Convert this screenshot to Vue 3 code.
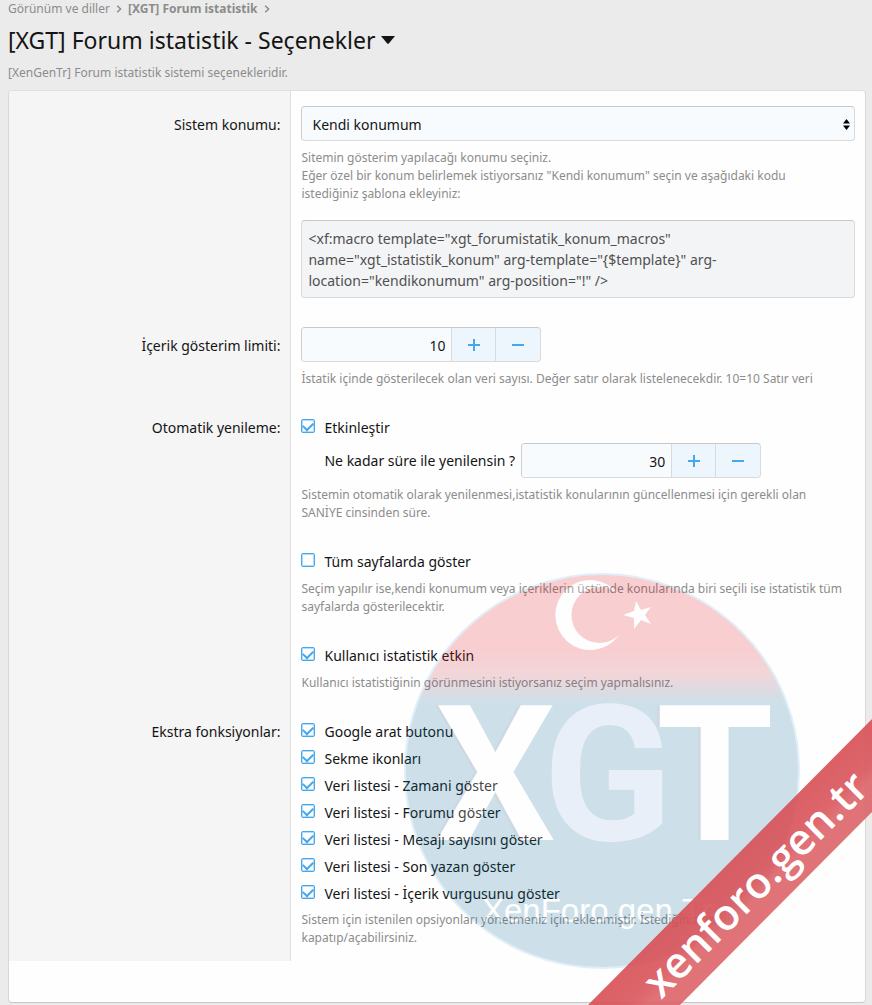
<script setup>
import { reactive, ref } from 'vue'

const location = ref('own')
const limit = ref(10)
const refresh = reactive({ enabled: true, seconds: 30 })
const allPages = ref(false)
const userStats = ref(true)
const extras = reactive([
  { id: 'google', label: 'Google arat butonu', on: true },
  { id: 'icons', label: 'Sekme ikonları', on: true },
  { id: 'time', label: 'Veri listesi - Zamani göster', on: true },
  { id: 'forum', label: 'Veri listesi - Forumu göster', on: true },
  { id: 'messages', label: 'Veri listesi - Mesajı sayısını göster', on: true },
  { id: 'author', label: 'Veri listesi - Son yazan göster', on: true },
  { id: 'content', label: 'Veri listesi - İçerik vurgusunu göster', on: true },
])
const macro =
  '<xf:macro template="xgt_forumistatik_konum_macros" name="xgt_istatistik_konum" arg-template="{$template}" arg-location="kendikonumum" arg-position="!" />'
</script>

<template>
  <div class="page">
    <nav class="crumbs">
      <a href="#">Görünüm ve diller</a>
      <svg class="chevron" viewBox="0 0 6 8"><path d="M1.2 0.8 4.6 4 1.2 7.2" /></svg>
      <a href="#" class="current">[XGT] Forum istatistik</a>
      <svg class="chevron" viewBox="0 0 6 8"><path d="M1.2 0.8 4.6 4 1.2 7.2" /></svg>
    </nav>

    <header class="heading">
      <h1>
        [XGT] Forum istatistik - Seçenekler
        <svg class="caret" viewBox="0 0 14 8"><path d="M0 0H14L7.8 7.4Q7 8 6.2 7.4Z" /></svg>
      </h1>
      <p>[XenGenTr] Forum istatistik sistemi seçenekleridir.</p>
    </header>

    <form class="panel" @submit.prevent>
      <div class="row">
        <div class="term pushed"><label for="location">Sistem konumu:</label></div>
        <div class="value">
          <div class="select">
            <select id="location" v-model="location">
              <option value="own">Kendi konumum</option>
            </select>
            <svg viewBox="0 0 7 11"><path d="M3.5 0 7 4.5H0ZM0 6.5H7L3.5 11Z" /></svg>
          </div>
          <p class="help">
            Sitemin gösterim yapılacağı konumu seçiniz.<br />
            Eğer özel bir konum belirlemek istiyorsanız "Kendi konumum" seçin ve aşağıdaki kodu<br />
            istediğiniz şablona ekleyiniz:
          </p>
          <div class="code">{{ macro }}</div>
        </div>
      </div>

      <div class="row">
        <div class="term pushed"><label for="limit">İçerik gösterim limiti:</label></div>
        <div class="value">
          <div class="stepper">
            <input id="limit" v-model.number="limit" type="text" inputmode="numeric" />
            <button type="button" aria-label="+" @click="limit++">
              <svg viewBox="0 0 12 12"><path d="M0 6H12M6 0V12" /></svg>
            </button>
            <button type="button" aria-label="−" @click="limit--">
              <svg viewBox="0 0 12 12"><path d="M0 6H12" /></svg>
            </button>
          </div>
          <p class="help">
            İstatik içinde gösterilecek olan veri sayısı. Değer satır olarak listelenecekdir. 10=10 Satır veri
          </p>
        </div>
      </div>

      <div class="row">
        <div class="term">Otomatik yenileme:</div>
        <div class="value">
          <label class="choice"><input v-model="refresh.enabled" type="checkbox" />Etkinleştir</label>
          <div class="dependent">
            <label for="seconds">Ne kadar süre ile yenilensin ?</label>
            <div class="stepper">
              <input id="seconds" v-model.number="refresh.seconds" type="text" inputmode="numeric" />
              <button type="button" aria-label="+" @click="refresh.seconds++">
                <svg viewBox="0 0 12 12"><path d="M0 6H12M6 0V12" /></svg>
              </button>
              <button type="button" aria-label="−" @click="refresh.seconds--">
                <svg viewBox="0 0 12 12"><path d="M0 6H12" /></svg>
              </button>
            </div>
          </div>
          <p class="help">
            Sistemin otomatik olarak yenilenmesi,istatistik konularının güncellenmesi için gerekli olan<br />
            SANİYE cinsinden süre.
          </p>
        </div>
      </div>

      <div class="row">
        <div class="term"></div>
        <div class="value">
          <label class="choice"><input v-model="allPages" type="checkbox" />Tüm sayfalarda göster</label>
          <p class="help">
            Seçim yapılır ise,kendi konumum veya içeriklerin üstünde konularında biri seçili ise istatistik tüm
            sayfalarda gösterilecektir.
          </p>
        </div>
      </div>

      <div class="row">
        <div class="term"></div>
        <div class="value">
          <label class="choice"><input v-model="userStats" type="checkbox" />Kullanıcı istatistik etkin</label>
          <p class="help">Kullanıcı istatistiğinin görünmesini istiyorsanız seçim yapmalısınız.</p>
        </div>
      </div>

      <div class="row">
        <div class="term">Ekstra fonksiyonlar:</div>
        <div class="value">
          <div class="choices">
            <label v-for="item in extras" :key="item.id" class="choice">
              <input v-model="item.on" type="checkbox" />{{ item.label }}
            </label>
          </div>
          <p class="help">
            Sistem için istenilen opsiyonları yönetmeniz için eklenmiştir. İstediğiniz özelliği<br />
            kapatıp/açabilirsiniz.
          </p>
        </div>
      </div>
      <div class="foot"></div>
    </form>

    <svg class="emblem" viewBox="0 0 396 396">
      <defs>
        <linearGradient id="disc" x1="0" y1="0" x2="0" y2="1">
          <stop offset="0.19" stop-color="#e1141e" />
          <stop offset="0.25" stop-color="#c83746" />
          <stop offset="0.33" stop-color="#0f6e9b" />
        </linearGradient>
      </defs>
      <circle cx="198" cy="198" r="197" fill="url(#disc)" stroke="#6eb4e1" stroke-width="2" />
      <path fill="#fff" d="M215 22A35 35 0 1 0 215 62A28 28 0 1 1 215 22Z" />
      <path fill="#fff" d="M232 28 237 37 247 34 241 42 247 51 237 47 230 56 230 45 219 42 230 38Z" />
      <g class="letters shade">
        <text x="28" y="267">X</text>
        <text x="249" y="267">T</text>
      </g>
      <g class="letters">
        <text x="31" y="267">X</text>
        <text x="139" y="267" class="pale">G</text>
        <text x="252" y="267">T</text>
      </g>
      <text class="site" x="78" y="349">XenForo.gen.Tr</text>
    </svg>

    <svg class="ribbon" viewBox="0 0 284 286">
      <defs>
        <linearGradient id="band" gradientUnits="userSpaceOnUse" x1="142" y1="144" x2="188" y2="190">
          <stop offset="0" stop-color="#d74f55" />
          <stop offset="0.45" stop-color="#d9555b" />
          <stop offset="0.65" stop-color="#dd6469" />
          <stop offset="1" stop-color="#dd6469" />
        </linearGradient>
      </defs>
      <path fill="url(#band)" fill-opacity="0.9" d="M284 0V93L92 286H0Z" />
      <text transform="translate(73 281) rotate(-45)">xenforo.gen.tr</text>
    </svg>
  </div>
</template>

<style>
body {
  background: #ebebeb;
}
</style>

<style scoped>
.page {
  position: relative;
  box-sizing: border-box;
  min-height: 100vh;
  padding: 0 6px 2px 8px;
  overflow: hidden;
  background: #ebebeb;
  color: #141414;
  font: 14px/21px 'Noto Sans', 'Open Sans', sans-serif;
}
.page * {
  box-sizing: border-box;
}
.crumbs {
  display: flex;
  align-items: center;
  gap: 6px;
  height: 17px;
  font-size: 12px;
  line-height: 17px;
}
.crumbs a {
  color: #8c8c8c;
  text-decoration: none;
}
.crumbs .current {
  font-weight: 700;
}
.chevron {
  width: 6px;
  height: 8px;
  fill: none;
  stroke: #8c8c8c;
  stroke-width: 1.5;
}
.heading {
  padding: 7px 0 8px;
}
h1 {
  display: flex;
  align-items: center;
  gap: 5px;
  margin: 0;
  font-size: 23px;
  font-weight: 400;
  line-height: 32px;
}
.caret {
  width: 14px;
  height: 8px;
  fill: #141414;
}
.heading p {
  margin: 8px 0 0;
  color: #8c8c8c;
  font-size: 12px;
  line-height: 18px;
}
.panel {
  border: 1px solid #d8d8d8;
  border-top-color: #dfdfdf;
  border-bottom-color: #c8c8c8;
  border-radius: 4px;
  background: #fefefe;
  overflow: hidden;
}
.row {
  display: grid;
  grid-template-columns: 33% 1fr;
}
.term {
  padding: 15px 10px;
  border-right: 1px solid #dfdfdf;
  background: #f5f5f5;
  text-align: right;
}
.term.pushed {
  padding-top: 23px;
}
.value {
  padding: 15px 10px 14px;
}
.select {
  position: relative;
}
.select select {
  display: block;
  width: 100%;
  height: 35px;
  padding: 1px 10px 0;
  appearance: none;
  border: 1px solid #dadada;
  border-top-color: #c8c8c8;
  border-left-color: #cfcfcf;
  border-radius: 4px;
  background: #f7fbfe;
  color: #141414;
  font: inherit;
}
.select svg {
  position: absolute;
  top: 13px;
  right: 5px;
  width: 7px;
  height: 11px;
  fill: #000;
  pointer-events: none;
}
.help {
  margin: 8px 0 0;
  color: #8c8c8c;
  font-size: 12px;
  line-height: 18px;
}
.choices + .help {
  margin-top: 7px;
}
.code {
  margin-top: 17px;
  padding: 7px 6px 6px;
  border: 1px solid #dadada;
  border-top-color: #c8c8c8;
  border-radius: 4px;
  background: #f3f4f6;
  color: #505050;
}
.stepper {
  display: inline-flex;
  height: 35px;
  padding-right: 1px;
  border: 1px solid #dadada;
  border-top-color: #c8c8c8;
  border-left-color: #cfcfcf;
  border-radius: 4px;
  background: #edf6fd;
  overflow: hidden;
  vertical-align: top;
}
.stepper input {
  width: 149px;
  padding: 2px 6px 0;
  border: 0;
  background: #f7fbfe;
  color: #141414;
  font: inherit;
  text-align: right;
}
.stepper button {
  display: flex;
  align-items: center;
  justify-content: center;
  width: 44px;
  padding: 0;
  border: 0;
  border-left: 1px solid #dadada;
  background: transparent;
}
.stepper svg {
  width: 12px;
  height: 12px;
  fill: none;
  stroke: #47a7eb;
  stroke-width: 2;
}
.choices {
  display: grid;
  gap: 6px;
}
.choice {
  display: flex;
  gap: 9px;
}
.choice input {
  display: flex;
  justify-content: center;
  width: 14px;
  height: 14px;
  margin: 2px 0 0;
  appearance: none;
  border: 1px solid #47a7eb;
  border-radius: 2px;
  background: #fefefe;
  box-shadow: inset 0 0 0 1px #b5dbf7;
}
.choice input:checked::before {
  width: 8px;
  height: 5px;
  margin-top: 2px;
  border: solid #47a7eb;
  border-width: 0 0 2px 2px;
  content: '';
  transform: rotate(-45deg);
}
.dependent {
  display: flex;
  align-items: center;
  gap: 6px;
  margin-top: 5px;
  padding-left: 23px;
}
.foot {
  height: 41px;
}
.emblem {
  position: absolute;
  top: 573px;
  right: 72px;
  width: 396px;
  height: 396px;
  opacity: 0.2;
  pointer-events: none;
}
.letters {
  fill: #fff;
  font: 700 190px Roboto, 'Liberation Sans', sans-serif;
}
.letters.shade {
  fill: #0f4678;
}
.letters .pale {
  fill: #96b9e6;
}
.site {
  fill: #fff;
  font: 33px 'Liberation Sans', sans-serif;
}
.ribbon {
  position: absolute;
  right: 0;
  bottom: 0;
  width: 284px;
  height: 286px;
  pointer-events: none;
}
.ribbon text {
  fill: #fff;
  font: 600 43px 'Open Sans', 'Noto Sans', sans-serif;
}
</style>
